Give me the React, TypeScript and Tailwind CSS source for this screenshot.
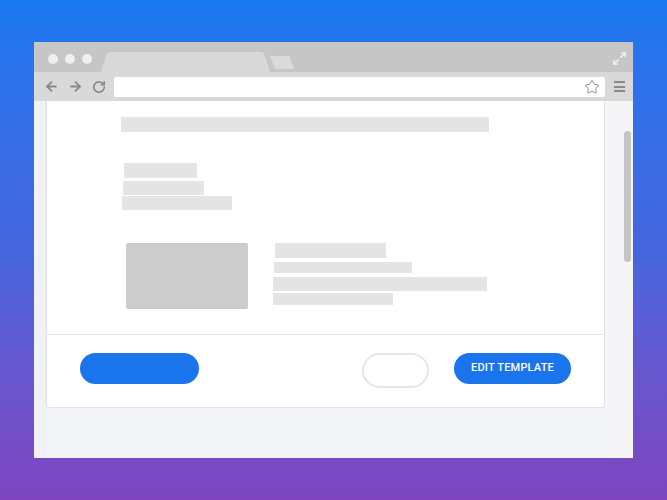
import React from 'react';
import { ArrowLeft, ArrowRight, RotateCw, Star, Maximize2 } from 'lucide-react';

function TitleBar() {
  return (
    <div className="relative h-[30px] bg-[#c6c6c6]">
      <svg className="absolute inset-0" width="599" height="30" viewBox="0 0 599 30">
        <circle cx="19" cy="17" r="5" fill="#efefef" />
        <circle cx="36" cy="17" r="5" fill="#efefef" />
        <circle cx="53" cy="17" r="5" fill="#efefef" />
        <path d="M67 30 L72.5 12.5 Q73.5 10 76 10 L227 10 Q229.5 10 230.5 12.5 L236 30 Z" fill="#d9d9d9" />
        <path d="M236 14 L255 14 L260 27 L241 27 Z" fill="#dadada" />
      </svg>
      <div className="absolute right-[6px] top-[9px] text-[#f4f4f4]">
        <Maximize2 size={15} strokeWidth={2.2} />
      </div>
    </div>
  );
}

function Toolbar() {
  return (
    <div className="flex h-[29px] items-center bg-[#d9d9d9] text-[#8a8a8a]">
      <div className="flex w-[80px] items-center gap-[9px] pl-[10px]">
        <ArrowLeft size={15} strokeWidth={3} />
        <ArrowRight size={15} strokeWidth={3} />
        <RotateCw size={14} strokeWidth={3} />
      </div>
      <div className="flex h-[20px] w-[491px] items-center justify-end rounded-[2px] bg-white pr-[5px]">
        <Star size={16} strokeWidth={1.2} className="text-[#777]" />
      </div>
      <div className="flex flex-1 flex-col items-center gap-[2.5px]">
        <div className="h-[2px] w-[11px] bg-[#888]" />
        <div className="h-[2px] w-[11px] bg-[#888]" />
        <div className="h-[2px] w-[11px] bg-[#888]" />
      </div>
    </div>
  );
}

function Bar({ className }: { className: string }) {
  return <div className={`bg-[#e4e4e4] ${className}`} />;
}

function TemplateCard() {
  return (
    <div className="flex h-[307px] w-[559px] flex-col rounded-b-[3px] border-x border-b border-[#e1e3e8] bg-white">
      <div className="flex h-[233px] flex-col">
        <Bar className="ml-[74px] mt-[16px] h-[15px] w-[368px]" />
        <Bar className="ml-[77px] mt-[31px] h-[15px] w-[73px]" />
        <Bar className="ml-[76px] mt-[3px] h-[14px] w-[81px]" />
        <Bar className="ml-[75px] mt-[1px] h-[14px] w-[110px]" />
        <div className="mt-[33px] flex">
          <div className="ml-[79px] h-[66px] w-[122px] rounded-[2px] bg-[#cccccc]" />
          <div className="flex flex-col">
            <Bar className="ml-[27px] h-[15px] w-[111px]" />
            <Bar className="ml-[26px] mt-[4px] h-[11px] w-[138px]" />
            <Bar className="ml-[25px] mt-[4px] h-[14px] w-[214px]" />
            <Bar className="ml-[25px] mt-[2px] h-[12px] w-[120px]" />
          </div>
        </div>
      </div>
      <div className="flex flex-1 items-start border-t border-[#e3e4e8] pl-[33px] pr-[33px] pt-[18px]">
        <button className="h-[31px] w-[119px] rounded-full bg-[#1a74ec]" />
        <div className="flex-1" />
        <button className="h-[35px] w-[67px] rounded-full border-2 border-[#e6e6e6] bg-white" />
        <button className="ml-[25px] flex h-[31px] w-[117px] items-center justify-center rounded-full bg-[#1a74ec] font-['Roboto',sans-serif] text-[11px] font-medium tracking-[0.2px] text-white">
          EDIT TEMPLATE
        </button>
      </div>
    </div>
  );
}

export default function App() {
  return (
    <div className="h-[500px] w-[667px] bg-gradient-to-b from-[#1778f0] via-[#4466de] to-[#7e44bf] pl-[34px] pt-[42px]">
      <div className="flex h-[416px] w-[599px] flex-col overflow-hidden">
        <TitleBar />
        <Toolbar />
        <div className="flex flex-1 bg-[#f3f4f7]">
          <div className="w-[12px] border-r border-[#eceef3] bg-[#f1f2f7]" />
          <TemplateCard />
          <div className="flex w-[28px] bg-[#f5f5f8] pl-[19px]">
            <div className="mt-[30px] h-[131px] w-[7px] rounded-full bg-[#c4c4c4]" />
          </div>
        </div>
      </div>
    </div>
  );
}
